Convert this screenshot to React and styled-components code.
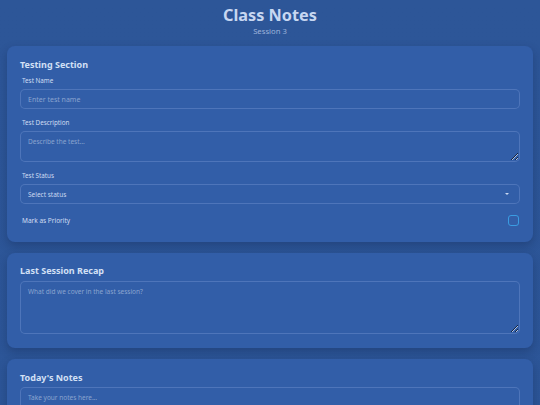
import React from 'react';
import styled, { createGlobalStyle } from 'styled-components';

const GlobalStyle = createGlobalStyle`
  * { box-sizing: border-box; }
  html, body {
    margin: 0;
    background-color: #2d5697;
    font-family: "Noto Sans", "Open Sans", sans-serif;
  }
`;

const Page = styled.div`
  min-height: 100vh;
  padding: 4px 7px 20px;
  background: linear-gradient(#2d5698, #2c5597);
`;

const Header = styled.header`
  text-align: center;
  margin-bottom: 10px;
`;

const Title = styled.h1`
  margin: 0;
  font-size: 16.3px;
  line-height: 22px;
  font-weight: 700;
  color: #c7d7f1;
`;

const Subtitle = styled.div`
  font-size: 7.7px;
  line-height: 10px;
  color: #9db3da;
`;

const Stack = styled.div`
  display: flex;
  flex-direction: column;
  gap: 11px;
`;

const Card = styled.section`
  background-color: #325ea8;
  border-radius: 8px;
  padding: ${(p) => p.$pad || '13px 13px 14px'};
  box-shadow: 0 4px 10px rgba(10, 25, 60, 0.28);
`;

const CardTitle = styled.h2`
  margin: 0 0 ${(p) => p.$gap || 6}px;
  font-size: 9px;
  line-height: 12px;
  font-weight: 700;
  color: #d3e0f5;
`;

const Field = styled.div`
  display: flex;
  flex-direction: column;
  margin-bottom: 10px;
`;

const Label = styled.label`
  font-size: 6.3px;
  line-height: 8px;
  padding-left: 2px;
  margin-bottom: 4px;
  color: #d0ddf2;
`;

const fieldBase = `
  display: block;
  width: 100%;
  margin: 0;
  background-color: #325ea8;
  border: 1px solid rgba(150, 180, 235, 0.28);
  border-radius: 5px;
  font-family: "Noto Sans", "Open Sans", sans-serif;
  font-size: 7px;
  color: #d0ddf2;
  outline: none;
  &::placeholder { color: #8aa4cf; }
`;

const Input = styled.input`
  ${fieldBase}
  height: 20px;
  padding: 0 7px;
`;

const TextArea = styled.textarea`
  ${fieldBase}
  height: ${(p) => p.$h}px;
  padding: 5px 7px;
  resize: vertical;
  font-size: ${(p) => p.$fs || 7}px;
`;

const SelectWrap = styled.div`
  position: relative;
`;

const Select = styled.select`
  ${fieldBase}
  appearance: none;
  height: 20px;
  padding: 0 7px;
  font-size: 6.5px;
  color: #cad8f0;
`;

const Caret = styled.span`
  position: absolute;
  right: 11px;
  top: 9px;
  width: 0;
  height: 0;
  border-left: 2px solid transparent;
  border-right: 2px solid transparent;
  border-top: 2.5px solid #cad8f0;
  pointer-events: none;
`;

const ToggleRow = styled.div`
  display: flex;
  align-items: center;
  justify-content: space-between;
  height: 12px;
  padding: 0 1px 0 2px;
  margin-bottom: 2px;
`;

const ToggleLabel = styled.span`
  font-size: 6.5px;
  color: #d0ddf2;
`;

const Check = styled.span`
  width: 11px;
  height: 11px;
  border: 1px solid #3a9ce2;
  border-radius: 3px;
`;

export default function App() {
  return (
    <>
      <GlobalStyle />
      <Page>
        <Header>
          <Title>Class Notes</Title>
          <Subtitle>Session 3</Subtitle>
        </Header>
        <Stack>
          <Card $pad="13px 13px 14px">
            <CardTitle>Testing Section</CardTitle>
            <Field>
              <Label>Test Name</Label>
              <Input placeholder="Enter test name" />
            </Field>
            <Field>
              <Label>Test Description</Label>
              <TextArea $h={31} $fs={6.5} placeholder="Describe the test..." />
            </Field>
            <Field>
              <Label>Test Status</Label>
              <SelectWrap>
                <Select defaultValue="">
                  <option value="">Select status</option>
                  <option value="pending">Pending</option>
                  <option value="passed">Passed</option>
                  <option value="failed">Failed</option>
                </Select>
                <Caret />
              </SelectWrap>
            </Field>
            <ToggleRow>
              <ToggleLabel>Mark as Priority</ToggleLabel>
              <Check />
            </ToggleRow>
          </Card>
          <Card $pad="12px 13px 14px">
            <CardTitle $gap={4}>Last Session Recap</CardTitle>
            <TextArea $h={53} $fs={6.5} placeholder="What did we cover in the last session?" />
          </Card>
          <Card $pad="13px 13px 14px">
            <CardTitle $gap={3}>Today's Notes</CardTitle>
            <TextArea $h={80} $fs={6.5} placeholder="Take your notes here..." />
          </Card>
        </Stack>
      </Page>
    </>
  );
}
